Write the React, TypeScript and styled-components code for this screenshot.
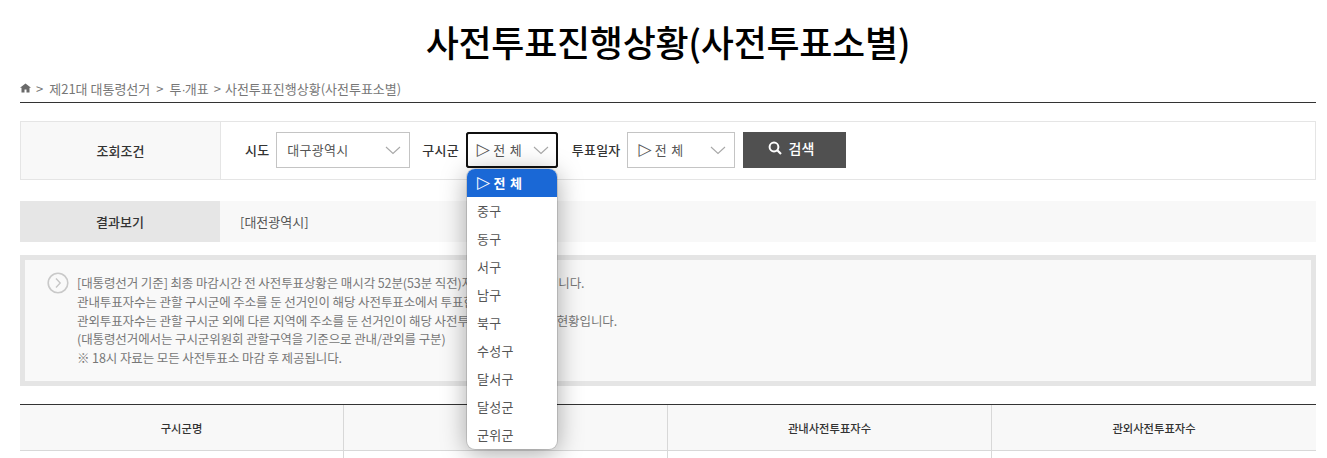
import React from "react";
import styled, { createGlobalStyle } from "styled-components";

const Global = createGlobalStyle`
  html, body { margin: 0; padding: 0; background: #fff; overflow: hidden; }
  body { font-family: "Noto Sans CJK KR", "Noto Sans", sans-serif; color: #333; }
  * { box-sizing: border-box; }
`;

const Page = styled.div`
  width: 1327px;
  height: 458px;
  padding: 0 11px 0 20px;
  overflow: hidden;
`;

const Title = styled.h1`
  margin: 0;
  height: 70px;
  padding-top: 12px;
  font-size: 36px;
  line-height: 58px;
  font-weight: 500;
  color: #000;
  text-align: center;
  letter-spacing: -0.3px;
`;

const Crumbs = styled.nav`
  display: flex;
  align-items: center;
  height: 33px;
  border-bottom: 1px solid #333;
  padding-top: 4px;
  font-size: 13px;
  color: #777;
`;

const Crumb = styled.span`
  margin-left: 5px;
  &::before { content: ">"; margin-right: 6px; }
  & + & { margin-left: 6px; }
  &:last-child { margin-left: 5px; }
  &:last-child::before { margin-right: 4px; }
`;

const Dot = styled.span`
  font-family: "Liberation Sans", sans-serif;
  letter-spacing: -1px;
`;

const SearchBox = styled.section`
  display: flex;
  height: 59px;
  margin-top: 18px;
  border: 1px solid #e5e5e5;
`;

const SearchLabel = styled.div`
  width: 200px;
  background: #f8f8f8;
  border-right: 1px solid #e5e5e5;
  display: flex;
  align-items: center;
  justify-content: center;
  font-size: 13px;
  font-weight: 500;
  color: #333;
`;

const Filters = styled.div`
  display: flex;
  align-items: center;
  padding: 0 0 2px 24px;
`;

const FieldLabel = styled.label<{ $gap: number }>`
  font-size: 13px;
  font-weight: 500;
  color: #333;
  margin-left: ${(p) => p.$gap}px;
  margin-right: 7px;
  letter-spacing: 0.2px;
`;

const SelectBox = styled.div<{ $w: number; $focus?: boolean }>`
  position: relative;
  width: ${(p) => p.$w}px;
  height: 36px;
  display: flex;
  align-items: center;
  padding-left: 10px;
  border: 1px solid #c4c4c4;
  background: #fff;
  font-size: 13px;
  color: #555;
  letter-spacing: 0.3px;
  ${(p) => p.$focus && `outline: 2px solid #101010; outline-offset: -2px; border-radius: 3px; border-color: #101010;`}
  & > svg { position: absolute; right: 8px; top: 13px; }
`;

const Tri = styled.span`
  font-family: "DejaVu Sans", sans-serif;
  font-size: 17px;
  line-height: 1;
  margin-right: 3px;
  font-weight: 400;
`;

const Word = styled.span`
  word-spacing: 1px;
`;

const SearchButton = styled.button`
  width: 103px;
  height: 36px;
  margin-left: 8px;
  display: flex;
  align-items: center;
  justify-content: center;
  gap: 7px;
  border: 0;
  background: #505050;
  color: #fff;
  font-family: inherit;
  font-size: 14px;
  font-weight: 500;
  padding: 0 8px 3px 0;
`;

const ResultRow = styled.section`
  display: flex;
  height: 41px;
  margin-top: 21px;
  background: #f8f8f8;
`;

const ResultLabel = styled.div`
  width: 200px;
  background: #e6e6e6;
  display: flex;
  align-items: center;
  justify-content: center;
  font-size: 13px;
  font-weight: 500;
`;

const ResultValue = styled.div`
  display: flex;
  align-items: center;
  padding-left: 20px;
  font-size: 13px;
  color: #555;
`;

const Notice = styled.section`
  position: relative;
  height: 131px;
  margin-top: 13px;
  border: 5px solid #e5e5e5;
  background: #f9f9f9;
  padding: 14px 0 0 52px;
  font-size: 12.5px;
  line-height: 18.75px;
  color: #777;
  letter-spacing: -0.1px;
  & > svg { position: absolute; left: 22px; top: 12px; }
`;

const NoticeLine = styled.div`
  white-space: nowrap;
`;

const Table = styled.div`
  display: grid;
  grid-template-columns: 323px 324px 324px 325px;
  margin-top: 18px;
  border-top: 1px solid #333;
`;

const HeaderCell = styled.div`
  height: 46px;
  display: flex;
  align-items: center;
  justify-content: center;
  background: #f8f8f8;
  border-bottom: 1px solid #d8d8d8;
  font-size: 11.3px;
  font-weight: 500;
  color: #333;
  & + & { border-left: 1px solid #d8d8d8; }
`;

const BodyCell = styled.div`
  height: 20px;
  background: #fff;
  & + & { border-left: 1px solid #d8d8d8; }
`;

const Dropdown = styled.ul`
  position: absolute;
  left: 467px;
  top: 169px;
  width: 90px;
  height: 280px;
  margin: 0;
  padding: 0;
  list-style: none;
  background: #fff;
  border-radius: 8px;
  overflow: hidden;
  box-shadow: 0 4px 26px rgba(0, 0, 0, 0.35), 0 0 0 1px rgba(0, 0, 0, 0.12);
  font-size: 13px;
  letter-spacing: 0.3px;
  z-index: 5;
`;

const Option = styled.li<{ $active?: boolean }>`
  height: 28px;
  display: flex;
  align-items: center;
  padding: 0 0 2px 10px;
  color: ${(p) => (p.$active ? "#fff" : "#555")};
  background: ${(p) => (p.$active ? "#1a68d6" : "transparent")};
  font-weight: ${(p) => (p.$active ? 700 : 400)};
`;

const Home = () => (
  <svg width="11" height="10" viewBox="0 0 11 10" aria-hidden>
    <path d="M5.5.4 0 4.8h1.5v4.8h3V6.6h2v3h3V4.8H11L5.5.4Z" fill="#6a6a6a" />
  </svg>
);

const Chevron = () => (
  <svg width="16" height="9" viewBox="0 0 16 9" aria-hidden>
    <path d="M1 1l7 6.5L15 1" fill="none" stroke="#a8a8a8" strokeWidth="1.1" />
  </svg>
);

const Magnifier = () => (
  <svg width="14" height="14" viewBox="0 0 14 14" aria-hidden>
    <circle cx="6" cy="6" r="4.4" fill="none" stroke="#fff" strokeWidth="2" />
    <path d="M9.3 9.3 13 13" stroke="#fff" strokeWidth="2.2" />
  </svg>
);

const CircleArrow = () => (
  <svg width="22" height="22" viewBox="0 0 22 22" aria-hidden>
    <circle cx="11" cy="11" r="9.8" fill="none" stroke="#c9c9c9" strokeWidth="1.6" />
    <path d="M9 6.5 13.2 11 9 15.5" fill="none" stroke="#c4c4c4" strokeWidth="1.3" />
  </svg>
);

const gus = ["중구", "동구", "서구", "남구", "북구", "수성구", "달서구", "달성군", "군위군"];

const All = () => (
  <>
    <Tri>▷</Tri>
    <Word>전 체</Word>
  </>
);

export default function App() {
  return (
    <Page>
      <Global />
      <Title>사전투표진행상황(사전투표소별)</Title>
      <Crumbs>
        <Home />
        <Crumb>제21대 대통령선거</Crumb>
        <Crumb>투<Dot>·</Dot>개표</Crumb>
        <Crumb>사전투표진행상황(사전투표소별)</Crumb>
      </Crumbs>
      <SearchBox>
        <SearchLabel>조회조건</SearchLabel>
        <Filters>
          <FieldLabel $gap={0}>시도</FieldLabel>
          <SelectBox $w={134}>대구광역시<Chevron /></SelectBox>
          <FieldLabel $gap={12}>구시군</FieldLabel>
          <SelectBox $w={92} $focus><All /><Chevron /></SelectBox>
          <FieldLabel $gap={14}>투표일자</FieldLabel>
          <SelectBox $w={108}><All /><Chevron /></SelectBox>
          <SearchButton><Magnifier />검색</SearchButton>
        </Filters>
      </SearchBox>
      <ResultRow>
        <ResultLabel>결과보기</ResultLabel>
        <ResultValue>[대전광역시]</ResultValue>
      </ResultRow>
      <Notice>
        <CircleArrow />
        <NoticeLine>[대통령선거 기준] 최종 마감시간 전 사전투표상황은 매시각 52분(53분 직전)자료를 집계한 것입니다.</NoticeLine>
        <NoticeLine>관내투표자수는 관할 구시군에 주소를 둔 선거인이 해당 사전투표소에서 투표한 현황</NoticeLine>
        <NoticeLine>관외투표자수는 관할 구시군 외에 다른 지역에 주소를 둔 선거인이 해당 사전투표소에서 투표한{"\u00A0"} 현황입니다.</NoticeLine>
        <NoticeLine>(대통령선거에서는 구시군위원회 관할구역을 기준으로 관내/관외를 구분)</NoticeLine>
        <NoticeLine>※ 18시 자료는 모든 사전투표소 마감 후 제공됩니다.</NoticeLine>
      </Notice>
      <Table>
        <HeaderCell>구시군명</HeaderCell>
        <HeaderCell>사전투표자수</HeaderCell>
        <HeaderCell>관내사전투표자수</HeaderCell>
        <HeaderCell>관외사전투표자수</HeaderCell>
        <BodyCell />
        <BodyCell />
        <BodyCell />
        <BodyCell />
      </Table>
      <Dropdown>
        <Option $active><All /></Option>
        {gus.map((g) => (
          <Option key={g}>{g}</Option>
        ))}
      </Dropdown>
    </Page>
  );
}
